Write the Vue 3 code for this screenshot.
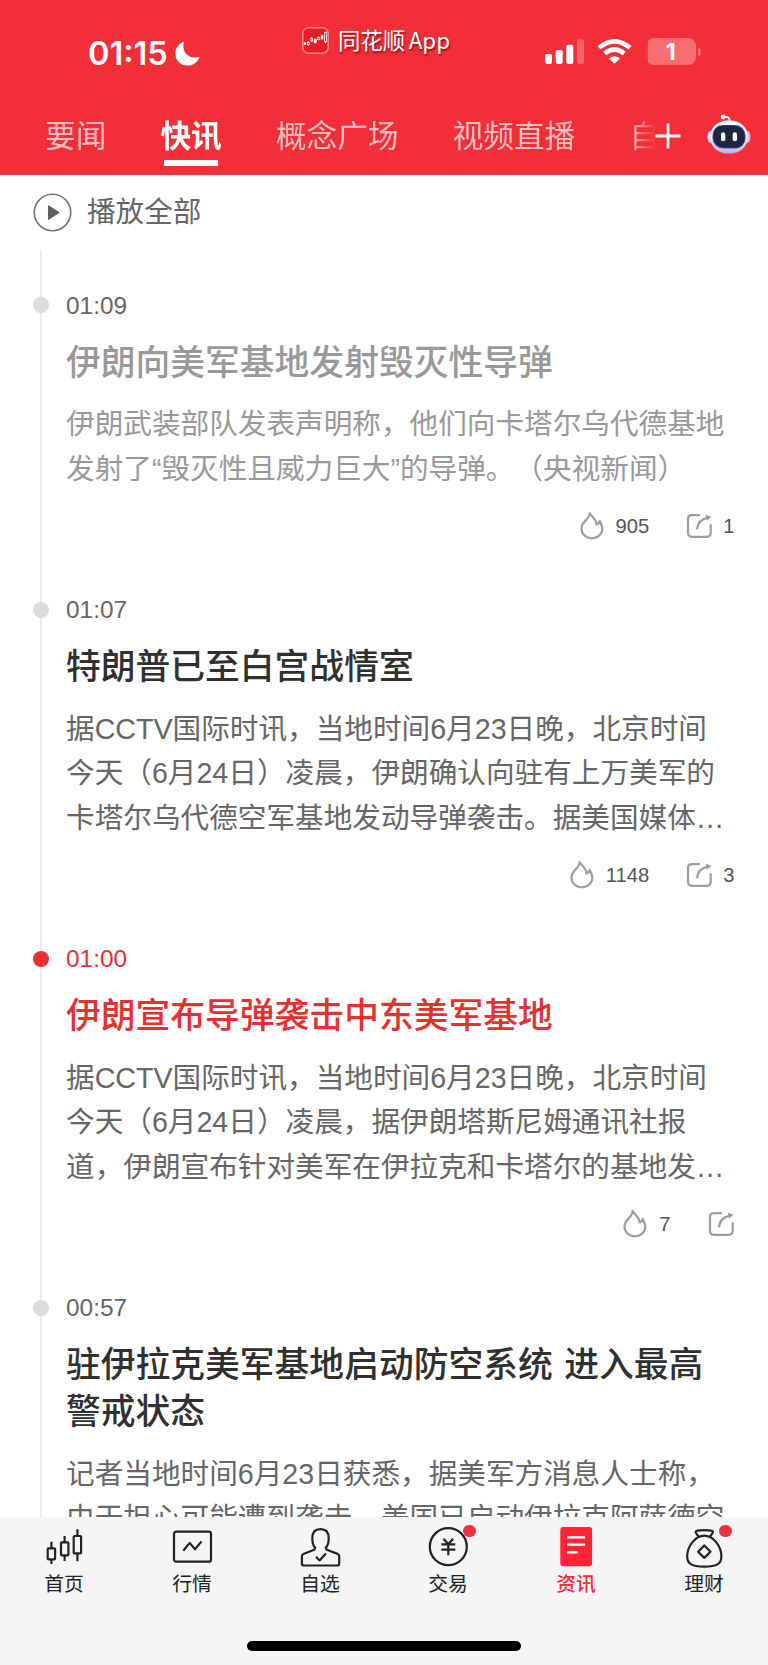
<script setup>
import { ref } from 'vue'

const channels = ['要闻', '快讯', '概念广场', '视频直播', '自选']
const activeChannel = ref('快讯')

const newsList = [
  {
    time: '01:09',
    state: 'read',
    title: ['伊朗向美军基地发射毁灭性导弹'],
    body: ['伊朗武装部队发表声明称，他们向卡塔尔乌代德基地', '发射了“毁灭性且威力巨大”的导弹。（央视新闻）'],
    hot: 905,
    share: 1,
  },
  {
    time: '01:07',
    state: '',
    title: ['特朗普已至白宫战情室'],
    body: [
      '据CCTV国际时讯，当地时间6月23日晚，北京时间',
      '今天（6月24日）凌晨，伊朗确认向驻有上万美军的',
      '卡塔尔乌代德空军基地发动导弹袭击。据美国媒体…',
    ],
    hot: 1148,
    share: 3,
  },
  {
    time: '01:00',
    state: 'important',
    title: ['伊朗宣布导弹袭击中东美军基地'],
    body: [
      '据CCTV国际时讯，当地时间6月23日晚，北京时间',
      '今天（6月24日）凌晨，据伊朗塔斯尼姆通讯社报',
      '道，伊朗宣布针对美军在伊拉克和卡塔尔的基地发…',
    ],
    hot: 7,
    share: 0,
  },
  {
    time: '00:57',
    state: '',
    title: ['驻伊拉克美军基地启动防空系统 进入最高', '警戒状态'],
    body: ['记者当地时间6月23日获悉，据美军方消息人士称，', '由于担心可能遭到袭击，美国已启动伊拉克阿萨德空'],
    hot: 0,
    share: 0,
  },
]

const tabs = [
  { key: 'home', label: '首页' },
  { key: 'market', label: '行情' },
  { key: 'favorite', label: '自选' },
  { key: 'trade', label: '交易', badge: true },
  { key: 'news', label: '资讯' },
  { key: 'wealth', label: '理财', badge: true },
]
const activeTab = ref('news')
</script>

<template>
  <div class="phone">
    <header class="header">
      <div class="status-bar">
        <div class="status-time">
          <span class="clock">01:15</span>
          <svg class="moon" viewBox="0 0 25 25">
            <path d="M9.3.4C8.2 3 8 5.600 8.800 8.500C10.200 13.600 15.500 17 20.700 16.500C22.100 16.400 23.300 16 24.600 15.500C23.100 21 18.300 24.600 12.400 24.600C5.500 24.600.3 19.300.3 12.500C.3 7 3.800 2.200 9.300.4Z" fill="#fff" />
          </svg>
        </div>
        <div class="status-app">
          <svg class="app-logo" viewBox="0 0 27 27">
            <rect x=".8" y=".8" width="25.400" height="25.400" rx="5.500" fill="#e31f23" stroke="#f5878b" stroke-width="1.500" />
            <g stroke="#fff" stroke-width=".8" fill="none">
              <path d="M6.300 14v5M9.700 10v5M13.200 11.500v5M16.600 9.500v4M20 7.500v5.500M23.500 4.500v12" />
              <rect x="2.200" y="15.800" width="1.600" height="1.600" fill="#fff" />
              <rect x="5.500" y="15.500" width="1.700" height="2" fill="#e31f23" />
              <rect x="8.800" y="11.500" width="1.800" height="2.500" fill="#e31f23" />
              <rect x="12.200" y="12.800" width="2" height="2.700" fill="#fff" />
              <rect x="15.700" y="10.500" width="1.800" height="1.900" fill="#e31f23" />
              <rect x="19.200" y="9" width="1.700" height="2.500" fill="#fff" />
              <rect x="22.600" y="5.500" width="1.900" height="9.500" fill="#e31f23" />
            </g>
          </svg>
          <span class="app-name">同花顺<i>App</i></span>
        </div>
        <div class="status-icons">
          <svg class="signal" viewBox="0 0 39 25">
            <g fill="#fff">
              <rect x="0" y="15" width="7" height="10" rx="2" />
              <rect x="10.700" y="11" width="7" height="14" rx="2" />
              <rect x="21.300" y="5.700" width="7" height="19.300" rx="2" />
              <rect x="32" y=".3" width="7" height="24.700" rx="2" opacity=".25" />
            </g>
          </svg>
          <svg class="wifi" viewBox="0 0 35 25">
            <path d="M2 8.800Q17.500-4.200 33 8.800M7.700 14.500Q17.500 6.500 27.300 14.500" fill="none" stroke="#fff" stroke-width="4.600" />
            <path d="M17.500 24.800L11.900 19.400Q17.500 14.900 23.100 19.400Z" fill="#fff" />
          </svg>
          <div class="battery"><span>1</span></div>
        </div>
      </div>

      <div class="channel-bar">
        <nav class="channels">
          <a
            v-for="name in channels"
            :key="name"
            class="channel"
            :class="{ active: name === activeChannel }"
            @click="activeChannel = name"
          >{{ name }}</a>
        </nav>
        <svg class="plus" viewBox="0 0 26 26">
          <path d="M13 .5v25M.5 13h25" stroke="#fff" stroke-width="2.800" />
        </svg>
        <svg class="robot" viewBox="0 0 44 41">
          <defs>
            <linearGradient id="shell" x1="0" y1="0" x2="0" y2="1">
              <stop offset="0" stop-color="#fff" />
              <stop offset=".6" stop-color="#e3e3f7" />
              <stop offset="1" stop-color="#b9b6e2" />
            </linearGradient>
            <linearGradient id="face" x1="0" y1="1" x2="1" y2="0">
              <stop offset="0" stop-color="#9a4be0" />
              <stop offset=".5" stop-color="#2b3150" />
              <stop offset="1" stop-color="#5a4fe0" />
            </linearGradient>
          </defs>
          <path d="M22.500 7V5.500Q22 2.500 17 3" fill="none" stroke="#f4ecff" stroke-width="1.700" />
          <circle cx="16.200" cy="3" r="2.400" fill="#fff" />
          <ellipse cx="3.500" cy="23" rx="3" ry="6" fill="#dcdcf5" />
          <ellipse cx="40.500" cy="23" rx="3" ry="6" fill="#c5c2ec" />
          <rect x="3" y="6.500" width="38" height="33" rx="17.500" fill="url(#shell)" />
          <rect x="5.500" y="11" width="33" height="23.500" rx="10.500" fill="url(#face)" />
          <rect x="6.500" y="11.800" width="31" height="21.800" rx="9.800" fill="#1c2640" />
          <rect x="14" y="18.300" width="4.300" height="9" rx="2.100" fill="#fff" />
          <rect x="25.700" y="18.300" width="4.300" height="9" rx="2.100" fill="#fff" />
        </svg>
      </div>
    </header>

    <main class="content">
      <div class="play-all">
        <svg class="play-icon" viewBox="0 0 40 40">
          <circle cx="20" cy="20" r="18.700" fill="none" stroke="#777" stroke-width="1.700" />
          <path d="M16 13.300L26.300 20L16 26.900Z" fill="#5f5f5f" stroke="#5f5f5f" stroke-width="1.300" stroke-linejoin="round" />
        </svg>
        <span>播放全部</span>
      </div>

      <div class="timeline">
        <article v-for="item in newsList" :key="item.time" class="news" :class="item.state">
          <time class="news-time">{{ item.time }}</time>
          <h3 class="news-title">
            <span v-for="line in item.title" :key="line">{{ line }}</span>
          </h3>
          <p class="news-body">
            <span v-for="line in item.body" :key="line">{{ line }}</span>
          </p>
          <div class="news-actions">
            <div class="action">
              <svg viewBox="0 0 28 28">
                <path d="M11.600 1.200C11.400 8 3.500 9 3.500 16.600C3.500 22.200 8 26.300 13.900 26.300C19.800 26.300 24.300 22.200 24.300 16.600C24.300 13.500 22.900 11.500 21.700 8.900C21.400 10.800 20.300 12.200 18.400 12.500C18.900 8 15 5.800 11.600 1.200Z" />
              </svg>
              <span v-if="item.hot">{{ item.hot }}</span>
            </div>
            <div class="action">
              <svg viewBox="0 0 28 28">
                <path d="M15 3.200H7Q3 3.200 3 7.200V20.800Q3 24.800 7 24.800H21.700Q25.700 24.800 25.700 20.800V12.300M11.900 17.300Q12.600 7.500 23.500 5.600" />
                <path d="M20.800 2.400L26.300 4.900L22 8.600Z" class="solid" />
              </svg>
              <span v-if="item.share">{{ item.share }}</span>
            </div>
          </div>
        </article>
      </div>
    </main>

    <footer class="footer">
      <nav class="tab-bar">
        <a
          v-for="tab in tabs"
          :key="tab.key"
          class="tab"
          :class="{ active: tab.key === activeTab }"
          @click="activeTab = tab.key"
        >
          <svg class="tab-icon" viewBox="0 0 48 44">
            <g v-if="tab.key === 'home'">
              <rect x="7.700" y="24.300" width="7.400" height="11" rx=".8" />
              <rect x="21" y="18.300" width="7.400" height="13" rx=".8" />
              <rect x="33.700" y="12" width="7.400" height="17.300" rx=".8" />
              <path d="M11.400 17.700v6.600M11.400 35.300V40M24.600 12v6.300M24.600 31.300V37M37.400 5.300V12M37.400 29.300v8" />
            </g>
            <g v-else-if="tab.key === 'market'">
              <rect x="6" y="7.700" width="37" height="30" rx="2.300" />
              <path d="M15.300 26.700L21.700 18.900L27 25.300L33.500 17.400" />
            </g>
            <g v-else-if="tab.key === 'favorite'">
              <path d="M19.200 23.600C16.900 21.500 16.300 18.800 16.300 14.200C16.300 8.600 19 5.200 24.500 5.200C30 5.200 32.700 8.600 32.700 14.200C32.700 18.800 32.100 21.500 29.800 23.600Q29.700 25.300 31.500 26L41.600 29.900Q43.200 30.600 43.200 32.200V39.400Q43.200 41.500 41 41.500H8Q5.900 41.500 5.900 39.400V32.200Q5.900 30.600 7.500 29.900L17.500 26Q19.300 25.300 19.200 23.600Z" />
              <path d="M20 32.700L23.600 36.400L30 29.500" />
            </g>
            <g v-else-if="tab.key === 'trade'">
              <circle cx="24.300" cy="22.700" r="18.500" />
              <path d="M19.500 14.700L24.300 20.300L29.100 14.700M24.300 20.300v11M17.300 20.300h14M17.300 25.700h14" />
            </g>
            <g v-else-if="tab.key === 'news'">
              <rect x="8.300" y="3" width="31.800" height="39.300" rx="3" class="fill" />
              <path d="M15.300 13.300h17.700M15.300 20.700h17.700M15.300 28.300h10.700" class="light" />
            </g>
            <g v-else>
              <path d="M18.200 12.300C17.500 10.500 15.800 9.500 15.600 7.900C15.500 6.600 17.500 6.200 24.300 6.200C31.100 6.200 33.100 6.600 33 7.900C32.800 9.500 31.100 10.500 30.400 12.300" />
              <path d="M24.300 11.700C15.500 11.700 7.200 22 7.200 32.500C7.200 40 12 42.700 24.300 42.700C36.600 42.700 41.400 40 41.400 32.500C41.400 22 33.100 11.700 24.300 11.700Z" />
              <path d="M24.300 21.500L30.500 27.700L24.300 33.900L18.100 27.700Z" />
            </g>
          </svg>
          <i v-if="tab.badge" class="badge"></i>
          <span>{{ tab.label }}</span>
        </a>
      </nav>
      <div class="home-indicator"></div>
    </footer>
  </div>
</template>

<style>
body {
  margin: 0;
  background: #fff;
}
</style>

<style scoped>
.phone {
  display: flex;
  flex-direction: column;
  width: 768px;
  height: 1665px;
  overflow: hidden;
  background: #fff;
  color: #333;
  font-family: "Liberation Sans", "Noto Sans CJK SC", sans-serif;
  text-spacing-trim: space-all;
}

svg {
  display: block;
  flex-shrink: 0;
  overflow: visible;
}

.header {
  flex-shrink: 0;
  height: 174.600px;
  background: #f22f38;
  color: #fff;
}

.status-bar {
  display: grid;
  grid-template-columns: 302px 243px 1fr;
  height: 97px;
}

.status-time {
  display: flex;
  align-items: flex-start;
  padding: 33px 0 0 88px;
}

.clock {
  width: 86.500px;
  padding-top: 1px;
  font: 600 32.500px/40px Inter, sans-serif;
}

.moon {
  width: 25px;
  height: 25px;
  margin-top: 7.500px;
}

.status-app {
  display: flex;
  gap: 9px;
  padding-top: 27px;
}

.app-logo {
  width: 27px;
  height: 27px;
}

.app-name {
  margin-top: -2px;
  font: 22.400px/28px "Noto Sans CJK SC", sans-serif;
  text-shadow: 1px 2px 2px rgba(90, 0, 0, 0.65);
  white-space: nowrap;
}

.app-name i {
  margin-left: 3.500px;
  font-style: normal;
}

.status-icons {
  display: flex;
  align-items: flex-start;
  padding-top: 39px;
}

.signal {
  width: 39px;
  height: 25px;
}

.wifi {
  width: 35px;
  height: 25px;
  margin-left: 13.300px;
}

.battery {
  position: relative;
  width: 50px;
  height: 27px;
  margin: -1px 0 0 13.300px;
  border-radius: 8px;
  background: linear-gradient(90deg, #ff3b30 1.500px, #f66d73 1.500px);
  font: 700 23px/28px Inter, sans-serif;
  text-align: center;
}

.battery::after {
  content: "";
  position: absolute;
  top: 9.500px;
  right: -5px;
  width: 3px;
  height: 8px;
  border-radius: 0 4px 4px 0;
  background: #f66d73;
}

.channel-bar {
  display: flex;
  align-items: center;
  height: 77.400px;
}

.channels {
  display: flex;
  gap: 54px;
  box-sizing: border-box;
  width: 655px;
  height: 77.400px;
  padding-left: 45px;
  overflow: hidden;
  mask-image: linear-gradient(90deg, #000 630px, transparent 656px);
}

.channel {
  display: flex;
  flex-direction: column;
  flex-shrink: 0;
  align-items: center;
  padding-top: 14px;
  color: rgba(255, 255, 255, 0.68);
  font: 30.700px/46px "Noto Sans CJK SC", sans-serif;
  white-space: nowrap;
}

.channel.active {
  color: #fff;
  font-weight: 700;
}

.channel.active::after {
  content: "";
  width: 54px;
  height: 6px;
  margin-top: 3px;
  background: #fff;
}

.plus {
  width: 26px;
  height: 26px;
}

.robot {
  width: 44px;
  height: 41px;
  margin: -2.500px 0 0 25.600px;
}

.content {
  flex: 1;
  min-height: 0;
  overflow: hidden;
}

.play-all {
  display: flex;
  align-items: center;
  gap: 15.500px;
  height: 75.400px;
  padding-left: 32.500px;
  color: #666;
  font-size: 28.600px;
  line-height: 40px;
}

.play-all span {
  padding-bottom: 1px;
}

.play-icon {
  width: 39px;
  height: 39px;
}

.timeline {
  padding-top: 40px;
  background: linear-gradient(#ededed, #ededed) 40px 0 / 2px 100% no-repeat;
}

.news {
  padding: 0 33.500px 52.200px 66px;
}

.news-time {
  display: flex;
  align-items: center;
  gap: 17px;
  height: 31px;
  margin-left: -33px;
  color: #666;
  font-size: 24.400px;
  line-height: 31px;
}

.news-time::before {
  content: "";
  width: 16px;
  height: 16px;
  border-radius: 50%;
  background: #dcdcdc;
}

.news-title {
  margin: 18.600px 0 0;
  color: #303030;
  font-size: 34.770px;
  font-weight: 500;
  line-height: 47px;
  word-spacing: 1.800px;
}

.news-title span,
.news-body span {
  display: block;
  white-space: nowrap;
}

.news-body {
  margin: 15.800px 0 0;
  color: #666;
  font-size: 28.640px;
  line-height: 44.600px;
}

.news-actions {
  display: flex;
  align-items: center;
  justify-content: flex-end;
  gap: 36px;
  height: 30px;
  margin-top: 19.600px;
  margin-bottom: 1px;
}

.action {
  display: flex;
  align-items: center;
  gap: 10px;
  color: #555;
  font-size: 20.200px;
}

.action svg {
  width: 28px;
  height: 28px;
  fill: none;
  stroke: #9e9e9e;
  stroke-width: 2.200;
  stroke-linejoin: round;
}

.action .solid {
  fill: #999;
  stroke: none;
}

.read .news-title,
.read .news-body {
  color: #999;
}

.important .news-time,
.important .news-title {
  color: #e93030;
}

.important .news-time::before {
  background: #e93030;
}

.footer {
  display: flex;
  flex-direction: column;
  flex-shrink: 0;
  align-items: center;
  justify-content: space-between;
  box-sizing: border-box;
  height: 148.300px;
  padding: 7px 0 14.500px;
  background: #f5f5f5;
}

.tab-bar {
  display: flex;
  width: 100%;
}

.tab {
  position: relative;
  display: flex;
  flex: 1;
  flex-direction: column;
  align-items: center;
  color: #222;
  font: 19.800px/30px "Noto Sans CJK SC", sans-serif;
}

.tab-icon {
  width: 48px;
  height: 44px;
  fill: none;
  stroke: #222;
  stroke-width: 2.200;
  stroke-linejoin: round;
}

.tab-icon .fill {
  fill: #ff2436;
  stroke: none;
}

.tab-icon .light {
  stroke: #fff;
  stroke-width: 2.200;
}

.tab.active {
  color: #ff2436;
  font-weight: 500;
}

.badge {
  position: absolute;
  top: 1px;
  left: 79px;
  width: 12.600px;
  height: 12.600px;
  border-radius: 50%;
  background: #f22f3c;
}

.home-indicator {
  width: 274px;
  height: 9.500px;
  border-radius: 5px;
  background: #000;
}
</style>
